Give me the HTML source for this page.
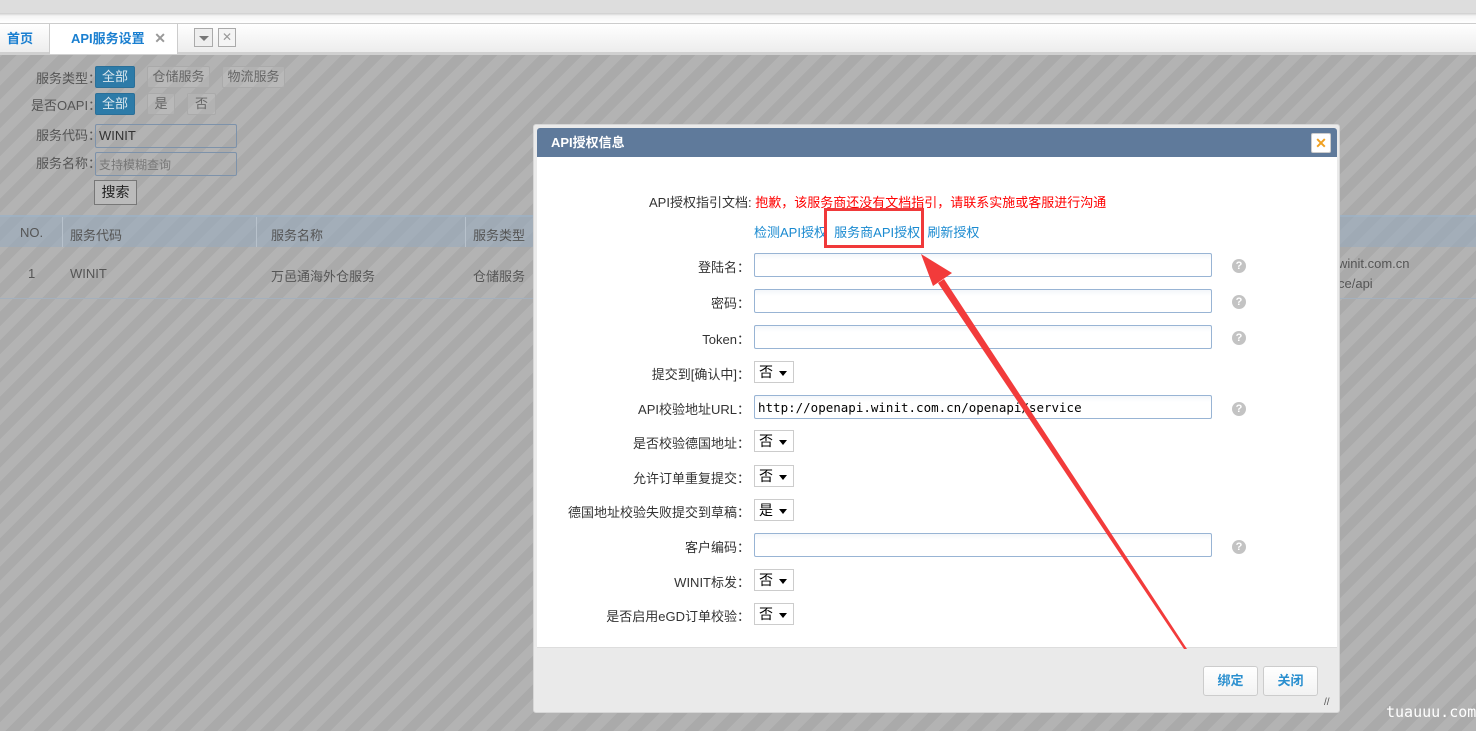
<!DOCTYPE html>
<html><head><meta charset="utf-8">
<style>
*{margin:0;padding:0;box-sizing:border-box}
body{width:1476px;height:731px;overflow:hidden;position:relative;font-family:"Liberation Sans","Noto Sans CJK SC",sans-serif;font-size:13px;color:#333;background:#fff}
.a{position:absolute}
.ov{position:absolute;left:0;top:55px;width:1476px;height:676px;background:repeating-linear-gradient(-45deg,#b3b3b3 0 10px,#aaaaaa 10px 20px)}
.lbl{position:absolute;text-align:right;width:220px;left:530px;font-size:13px;color:#333}
.inp{position:absolute;left:754px;width:458px;height:24px;border:1px solid #98b4d4;border-radius:2px;background:linear-gradient(#f3f6fa,#fff 6px)}
.sel{position:absolute;left:754px;width:40px;height:22px;border:1px solid #ccc;background:#fff;font-size:14px;padding-left:4px;line-height:20px;color:#000}
.sel:after{content:"";position:absolute;right:6px;top:9px;border-left:4px solid transparent;border-right:4px solid transparent;border-top:5px solid #000}
.q{position:absolute;left:1232px;width:14px;height:14px;border-radius:50%;background:#c3c3c3;color:#fff;font-size:11px;font-weight:bold;text-align:center;line-height:14px}
.fb{position:absolute;height:22px;border:1px solid #aaa;border-radius:2px;font-size:13px;color:#666;text-align:center;line-height:20px;background:rgba(200,200,200,.3)}
.fb.on{background:#2d7ba8;color:#dbe7ee;border-color:#2a6f98}
</style></head><body>
<div class="a" style="left:0;top:0;width:1476px;height:13px;background:#ddd"></div>
<div class="a" style="left:0;top:13px;width:1476px;height:10px;background:linear-gradient(#ccc,#f4f4f4 3px,#fff)"></div>
<div class="a" style="left:0;top:23px;width:1476px;height:1px;background:#ccc"></div>
<div class="a" style="left:0;top:24px;width:1476px;height:29px;background:linear-gradient(#fff,#ececec)"></div>
<div class="a" style="left:0;top:52px;width:1476px;height:3px;background:#d0d0d0"></div>
<div class="a" style="left:0;top:24px;width:50px;height:29px;border-right:1px solid #ccc;color:#1a7fd0;font-weight:bold;font-size:13px;line-height:29px;padding-left:7px">首页</div>
<div class="a" style="left:50px;top:24px;width:128px;height:30px;background:#fff;border-right:1px solid #ccc;color:#1a7fd0;font-weight:bold;font-size:13px;line-height:29px;padding-left:21px">API服务设置 <span style="color:#999;margin-left:6px;font-size:14px">✕</span></div>
<div class="a" style="left:194px;top:28px;width:19px;height:19px;border:1px solid #aaa;background:#eee"><div style="margin:7px 0 0 4px;border-left:5px solid transparent;border-right:5px solid transparent;border-top:5px solid #777;width:0"></div></div>
<div class="a" style="left:218px;top:28px;width:18px;height:19px;border:1px solid #aaa;background:#f4f4f4;color:#999;font-size:12px;text-align:center;line-height:17px">✕</div>

<div class="ov"></div>
<div class="a" style="left:0;top:55px;width:1476px;height:676px;color:#555">
 <div class="a" style="left:36px;top:13px">服务类型：</div>
 <div class="fb on" style="left:95px;top:11px;width:40px">全部</div>
 <div class="fb" style="left:147px;top:11px;width:63px">仓储服务</div>
 <div class="fb" style="left:222px;top:11px;width:63px">物流服务</div>
 <div class="a" style="left:31px;top:40px">是否OAPI：</div>
 <div class="fb on" style="left:95px;top:38px;width:40px">全部</div>
 <div class="fb" style="left:147px;top:38px;width:28px">是</div>
 <div class="fb" style="left:187px;top:38px;width:29px">否</div>
 <div class="a" style="left:36px;top:70px">服务代码：</div>
 <div class="a" style="left:95px;top:69px;width:142px;height:24px;border:1px solid #7d92aa;border-radius:2px;color:#333;padding:3px 3px;font-size:13px">WINIT</div>
 <div class="a" style="left:36px;top:98px">服务名称：</div>
 <div class="a" style="left:95px;top:97px;width:142px;height:24px;border:1px solid #7d92aa;border-radius:2px;color:#777;padding:3px 3px;font-size:12px">支持模糊查询</div>
 <div class="a" style="left:94px;top:125px;width:43px;height:25px;border:1px solid #777;background:#bbb;color:#222;font-size:14px;text-align:center;line-height:23px">搜索</div>
 <div class="a" style="left:0;top:160px;width:1476px;height:32px;background:rgba(150,170,190,.55);border-top:2px solid rgba(160,180,200,.6)"></div>
 <div class="a" style="left:20px;top:170px">NO.</div>
 <div class="a" style="left:62px;top:162px;height:30px;border-left:1px solid #b8c2cc"></div>
 <div class="a" style="left:70px;top:170px">服务代码</div>
 <div class="a" style="left:256px;top:162px;height:30px;border-left:1px solid #b8c2cc"></div>
 <div class="a" style="left:271px;top:170px">服务名称</div>
 <div class="a" style="left:465px;top:162px;height:30px;border-left:1px solid #b8c2cc"></div>
 <div class="a" style="left:473px;top:170px">服务类型</div>
 <div class="a" style="left:28px;top:211px">1</div>
 <div class="a" style="left:70px;top:211px">WINIT</div>
 <div class="a" style="left:271px;top:211px">万邑通海外仓服务</div>
 <div class="a" style="left:473px;top:211px">仓储服务</div>
 <div class="a" style="left:1338px;top:201px">winit.com.cn</div>
 <div class="a" style="left:1338px;top:221px">ce/api</div>
 <div class="a" style="left:0;top:243px;width:1476px;height:1px;background:#a4b0bd"></div>
</div>

<div class="a" style="left:533px;top:124px;width:807px;height:589px;background:#eaeaea;border:1px solid #d6d6d6;border-radius:3px"></div>
<div class="a" style="left:537px;top:128px;width:800px;height:29px;background:#5f7a9b;border-radius:3px 3px 0 0;color:#fff;font-weight:bold;font-size:13px;line-height:29px;padding-left:14px">API授权信息</div>
<div class="a" style="left:1311px;top:133px;width:20px;height:20px;background:#fff;border:1px solid #ccc;border-radius:2px;color:#f0a020;font-weight:bold;text-align:center;line-height:18px;font-size:14px">✕</div>
<div class="a" style="left:537px;top:157px;width:800px;height:490px;background:#fff"></div>
<div class="a" style="left:537px;top:647px;width:800px;height:1px;background:#ddd"></div>

<div class="a" style="left:649px;top:192px;font-size:13px;color:#333">API授权指引文档: <span style="color:#f00">抱歉，该服务商还没有文档指引，请联系实施或客服进行沟通</span></div>
<div class="a" style="left:754px;top:222px;font-size:13px;color:#1a8ad0">检测API授权 &nbsp;服务商API授权 &nbsp;刷新授权</div>
<div class="a" style="left:824px;top:208px;width:100px;height:40px;border:3px solid #f0393a"></div>

<div class="lbl" style="top:257px">登陆名：</div><div class="inp" style="top:253px"></div><div class="q" style="top:259px">?</div>
<div class="lbl" style="top:293px">密码：</div><div class="inp" style="top:289px"></div><div class="q" style="top:295px">?</div>
<div class="lbl" style="top:329px">Token：</div><div class="inp" style="top:325px"></div><div class="q" style="top:331px">?</div>
<div class="lbl" style="top:364px">提交到[确认中]：</div><div class="sel" style="top:361px">否</div>
<div class="lbl" style="top:399px">API校验地址URL：</div><div class="inp" style="top:395px;font-family:'DejaVu Sans Mono',monospace;font-size:12.5px;padding:4px 3px;color:#000">http://openapi.winit.com.cn/openapi/service</div><div class="q" style="top:402px">?</div>
<div class="lbl" style="top:433px">是否校验德国地址：</div><div class="sel" style="top:430px">否</div>
<div class="lbl" style="top:468px">允许订单重复提交：</div><div class="sel" style="top:465px">否</div>
<div class="lbl" style="top:502px">德国地址校验失败提交到草稿：</div><div class="sel" style="top:499px">是</div>
<div class="lbl" style="top:537px">客户编码：</div><div class="inp" style="top:533px"></div><div class="q" style="top:540px">?</div>
<div class="lbl" style="top:572px">WINIT标发：</div><div class="sel" style="top:569px">否</div>
<div class="lbl" style="top:606px">是否启用eGD订单校验：</div><div class="sel" style="top:603px">否</div>

<div class="a" style="left:1203px;top:666px;width:55px;height:30px;border:1px solid #ccc;border-radius:3px;background:linear-gradient(#fff,#f2f2f2);color:#2a8fcf;font-weight:bold;text-align:center;line-height:28px">绑定</div>
<div class="a" style="left:1263px;top:666px;width:55px;height:30px;border:1px solid #ccc;border-radius:3px;background:linear-gradient(#fff,#f2f2f2);color:#2a8fcf;font-weight:bold;text-align:center;line-height:28px">关闭</div>
<div class="a" style="left:1324px;top:697px;color:#555;font-size:10px">//</div>

<svg class="a" style="left:0;top:0" width="1476" height="731">
<polygon points="1187,649 1184,649 938,283 944,279" fill="#f23b3b"/>
<polygon points="921,254 952,273 933,286" fill="#f23b3b"/>
</svg>
<div class="a" style="left:1386px;top:703px;color:#fff;font-family:'DejaVu Sans Mono',monospace;font-size:15px">tuauuu.com</div>
</body></html>
